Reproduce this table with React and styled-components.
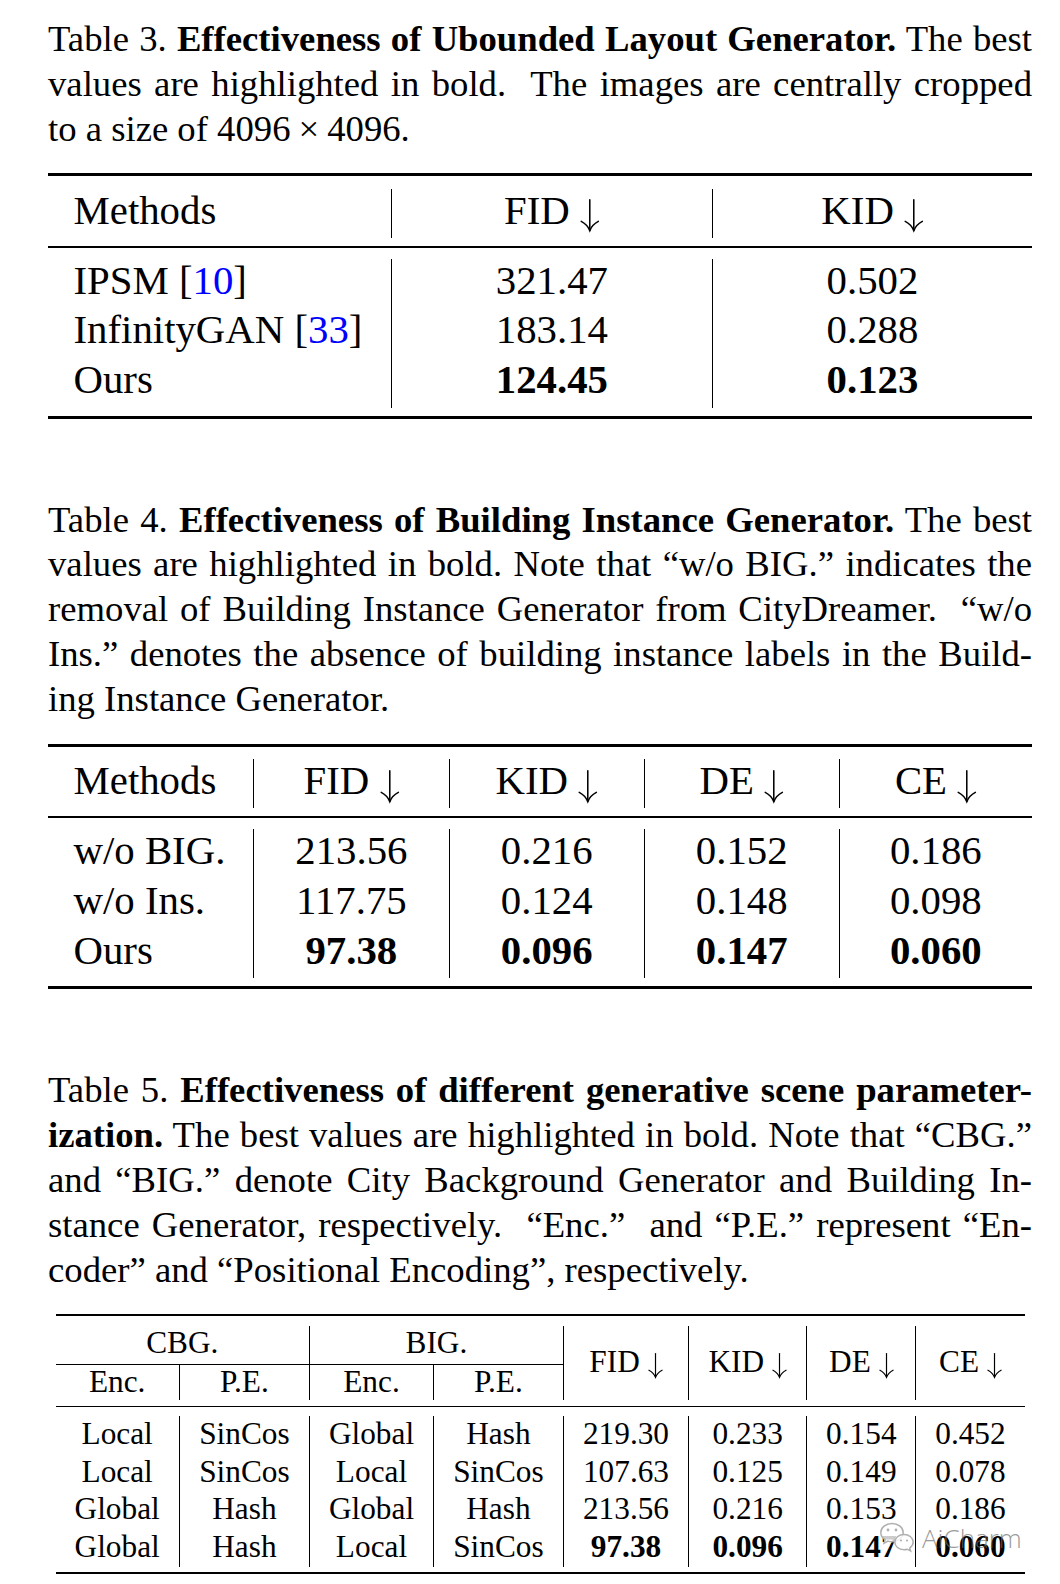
import React from 'react';
import styled, { createGlobalStyle } from 'styled-components';

const GlobalStyle = createGlobalStyle`
  html, body {
    margin: 0;
    padding: 0;
    background: #fff;
  }
  body {
    font-family: "Liberation Serif", "Times New Roman", serif;
    color: #000;
  }
`;

const Page = styled.div`
  position: relative;
  width: 1060px;
  height: 1584px;
  padding: 17px 28px 0 48px;
  box-sizing: border-box;
  overflow: hidden;
`;

const Caption = styled.div`
  font-size: 36.7px;
  line-height: 44.9px;
  margin-top: ${p => p.$gap || 0}px;
`;

const Line = styled.div`
  text-align: ${p => (p.$last ? 'left' : 'justify')};
  text-align-last: ${p => (p.$last ? 'left' : 'justify')};
  word-spacing: ${p => (p.$last ? '0' : '-3px')};
`;

const MathOp = styled.span`
  margin: 0 8px;
`;

const Cite = styled.span`
  color: #0000ff;
`;

const HeadText = styled.span`
  white-space: nowrap;
`;

// the math "\downarrow" of the header cells, drawn to the font size
const ArrowSvg = styled.svg`
  width: 0.48em;
  height: 0.79em;
  vertical-align: -0.18em;
  overflow: visible;
`;

const Table = styled.div`
  width: ${p => p.$w}px;
  margin: 21.7px auto 0;
  border-top: ${p => p.$rule}px solid #000;
  border-bottom: ${p => p.$rule}px solid #000;
  font-size: ${p => p.$fs}px;
  line-height: ${p => p.$fs}px;
`;

const Section = styled.div`
  display: grid;
  grid-template-columns: ${p => p.$cols};
  padding: ${p => p.$pt}px 0 ${p => p.$pb}px;
  border-bottom: ${p => (p.$mid ? `${p.$mid}px solid #000` : 'none')};
`;

const Cell = styled.div`
  height: ${p => p.$h}px;
  box-sizing: border-box;
  white-space: nowrap;
  padding-top: 2px;
  text-align: ${p => (p.$left ? 'left' : 'center')};
  padding-left: ${p => (p.$left ? '25.5px' : '0')};
  border-left: ${p => (p.$line ? `${p.$lw || 1.5}px solid #000` : 'none')};
  font-weight: ${p => (p.$bold ? 700 : 400)};
`;

const HeadGrid = styled.div`
  display: grid;
  grid-template-columns: ${p => p.$cols};
  grid-template-rows: 37.7px 1px 35.7px;
  padding: 9.8px 0 5.6px;
  border-bottom: 1.7px solid #000;
`;

const HeadCell = styled.div`
  grid-column: ${p => p.$col};
  grid-row: ${p => p.$row};
  white-space: nowrap;
  text-align: center;
  border-left: ${p => (p.$line ? '1.2px solid #000' : 'none')};
  display: flex;
  justify-content: center;
  align-items: ${p => (p.$middle ? 'center' : 'flex-start')};
  padding-top: ${p => (p.$middle ? '0' : '1px')};
  padding-bottom: ${p => (p.$middle ? '3px' : '0')};
  box-sizing: border-box;
`;

const CMidRule = styled.div`
  grid-column: 1 / 5;
  grid-row: 2;
  background: #000;
`;

const Watermark = styled.div`
  position: absolute;
  left: 879px;
  top: 1521px;
  display: flex;
  align-items: flex-end;
  gap: 7px;
  pointer-events: none;
`;

const MarkText = styled.span`
  font-family: "Open Sans", "Liberation Sans", sans-serif;
  font-weight: 300;
  font-size: 26px;
  line-height: 30px;
  color: rgba(110, 110, 110, 0.7);
`;

const Arrow = () => (
  <ArrowSvg viewBox="0 0 19 31" role="img" aria-label="↓">
    <g fill="none" stroke="#000" strokeWidth="1.5" strokeLinecap="round">
      <path d="M9.5 0.6V30.2" />
      <path d="M1.2 21.6C5 23.6 8 26.6 9.5 30.6C11 26.6 14 23.6 17.8 21.6" />
    </g>
  </ArrowSvg>
);

const Head = ({ children }) => (
  <HeadText>
    {children} <Arrow />
  </HeadText>
);

const SimpleTable = ({ cols, header, rows }) => (
  <Table $w={984} $rule={3.3} $fs={40.8}>
    <Section $cols={cols} $pt={12.7} $pb={7.7} $mid={2.2}>
      {header.map((h, i) => (
        <Cell key={i} $h={49} $left={i === 0} $line={i > 0}>
          {i === 0 ? h : <Head>{h}</Head>}
        </Cell>
      ))}
    </Section>
    <Section $cols={cols} $pt={11} $pb={7.7}>
      {rows.map((r, ri) =>
        r.cells.map((c, ci) => (
          <Cell key={`${ri}-${ci}`} $h={49.7} $left={ci === 0} $line={ci > 0} $bold={r.bold && ci > 0}>
            {c}
          </Cell>
        ))
      )}
    </Section>
  </Table>
);

const t3Rows = [
  { cells: [<>IPSM [<Cite>10</Cite>]</>, '321.47', '0.502'] },
  { cells: [<>InfinityGAN [<Cite>33</Cite>]</>, '183.14', '0.288'] },
  { cells: ['Ours', '124.45', '0.123'], bold: true },
];

const t4Rows = [
  { cells: ['w/o BIG.', '213.56', '0.216', '0.152', '0.186'] },
  { cells: ['w/o Ins.', '117.75', '0.124', '0.148', '0.098'] },
  { cells: ['Ours', '97.38', '0.096', '0.147', '0.060'], bold: true },
];

const t5Rows = [
  { cells: ['Local', 'SinCos', 'Global', 'Hash', '219.30', '0.233', '0.154', '0.452'] },
  { cells: ['Local', 'SinCos', 'Local', 'SinCos', '107.63', '0.125', '0.149', '0.078'] },
  { cells: ['Global', 'Hash', 'Global', 'Hash', '213.56', '0.216', '0.153', '0.186'] },
  { cells: ['Global', 'Hash', 'Local', 'SinCos', '97.38', '0.096', '0.147', '0.060'], boldFrom: 4 },
];

const T5COLS = '123.3px 130.2px 124px 129.8px 125.4px 118px 109.3px 109px';

const WeChatIcon = () => (
  <svg width="36" height="32" viewBox="0 0 36 32">
    <g fill="rgba(255,255,255,0.8)" stroke="#b0b0b0" strokeWidth="1.5">
      <path d="M13 2.5C6.6 2.5 1.8 6.6 1.8 11.6c0 2.9 1.6 5.4 4.2 7.1l-1 3.5 4-2.1c1.3.4 2.6.6 4 .6 6.4 0 11.2-4.1 11.2-9.1S19.4 2.5 13 2.5z" />
      <path d="M25 13.5c-5.2 0-9.2 3.4-9.2 7.6s4 7.6 9.2 7.6c1.1 0 2.2-.2 3.2-.5l3.4 1.8-.9-3c2.1-1.4 3.5-3.5 3.5-5.9 0-4.2-4-7.6-9.2-7.6z" />
    </g>
    <g fill="#b0b0b0">
      <circle cx="9" cy="9" r="1.4" />
      <circle cx="17" cy="9" r="1.4" />
      <circle cx="22" cy="19.5" r="1.1" />
      <circle cx="28" cy="19.5" r="1.1" />
    </g>
  </svg>
);

export default function App() {
  return (
    <Page>
      <GlobalStyle />
      <Caption>
        <Line>Table 3. <b>Effectiveness of Ubounded Layout Generator.</b> The best</Line>
        <Line>values are highlighted in bold.&nbsp; The images are centrally cropped</Line>
        <Line $last>to a size of 4096<MathOp>×</MathOp>4096.</Line>
      </Caption>
      <SimpleTable
        cols="342.7px 321.3px 320px"
        header={['Methods', 'FID', 'KID']}
        rows={t3Rows}
      />

      <Caption $gap={79}>
        <Line>Table 4. <b>Effectiveness of Building Instance Generator.</b> The best</Line>
        <Line>values are highlighted in bold. Note that “w/o BIG.” indicates the</Line>
        <Line>removal of Building Instance Generator from CityDreamer.&nbsp; “w/o</Line>
        <Line>Ins.” denotes the absence of building instance labels in the Build-</Line>
        <Line $last>ing Instance Generator.</Line>
      </Caption>
      <SimpleTable
        cols="205px 195.7px 195px 195px 193.3px"
        header={['Methods', 'FID', 'KID', 'DE', 'CE']}
        rows={t4Rows}
      />

      <Caption $gap={79}>
        <Line>Table 5. <b>Effectiveness of different generative scene parameter-</b></Line>
        <Line><b>ization.</b> The best values are highlighted in bold. Note that “CBG.”</Line>
        <Line>and “BIG.” denote City Background Generator and Building In-</Line>
        <Line>stance Generator, respectively.&nbsp; “Enc.”&nbsp; and “P.E.” represent “En-</Line>
        <Line $last>coder” and “Positional Encoding”, respectively.</Line>
      </Caption>
      <Table $w={969} $rule={2.5} $fs={31.3}>
        <HeadGrid $cols={T5COLS}>
          <HeadCell $col="1 / 3" $row="1">CBG.</HeadCell>
          <HeadCell $col="3 / 5" $row="1" $line>BIG.</HeadCell>
          <CMidRule />
          <HeadCell $col="1" $row="3">Enc.</HeadCell>
          <HeadCell $col="2" $row="3" $line>P.E.</HeadCell>
          <HeadCell $col="3" $row="3" $line>Enc.</HeadCell>
          <HeadCell $col="4" $row="3" $line>P.E.</HeadCell>
          <HeadCell $col="5" $row="1 / 4" $line $middle><Head>FID</Head></HeadCell>
          <HeadCell $col="6" $row="1 / 4" $line $middle><Head>KID</Head></HeadCell>
          <HeadCell $col="7" $row="1 / 4" $line $middle><Head>DE</Head></HeadCell>
          <HeadCell $col="8" $row="1 / 4" $line $middle><Head>CE</Head></HeadCell>
        </HeadGrid>
        <Section $cols={T5COLS} $pt={9.3} $pb={5.3}>
          {t5Rows.map((r, ri) =>
            r.cells.map((c, ci) => (
              <Cell
                key={`${ri}-${ci}`}
                $h={37.6}
                $line={ci > 0}
                $lw={1.2}
                $bold={r.boldFrom !== undefined && ci >= r.boldFrom}
              >
                {c}
              </Cell>
            ))
          )}
        </Section>
      </Table>

      <Watermark>
        <WeChatIcon />
        <MarkText>AiCharm</MarkText>
      </Watermark>
    </Page>
  );
}
